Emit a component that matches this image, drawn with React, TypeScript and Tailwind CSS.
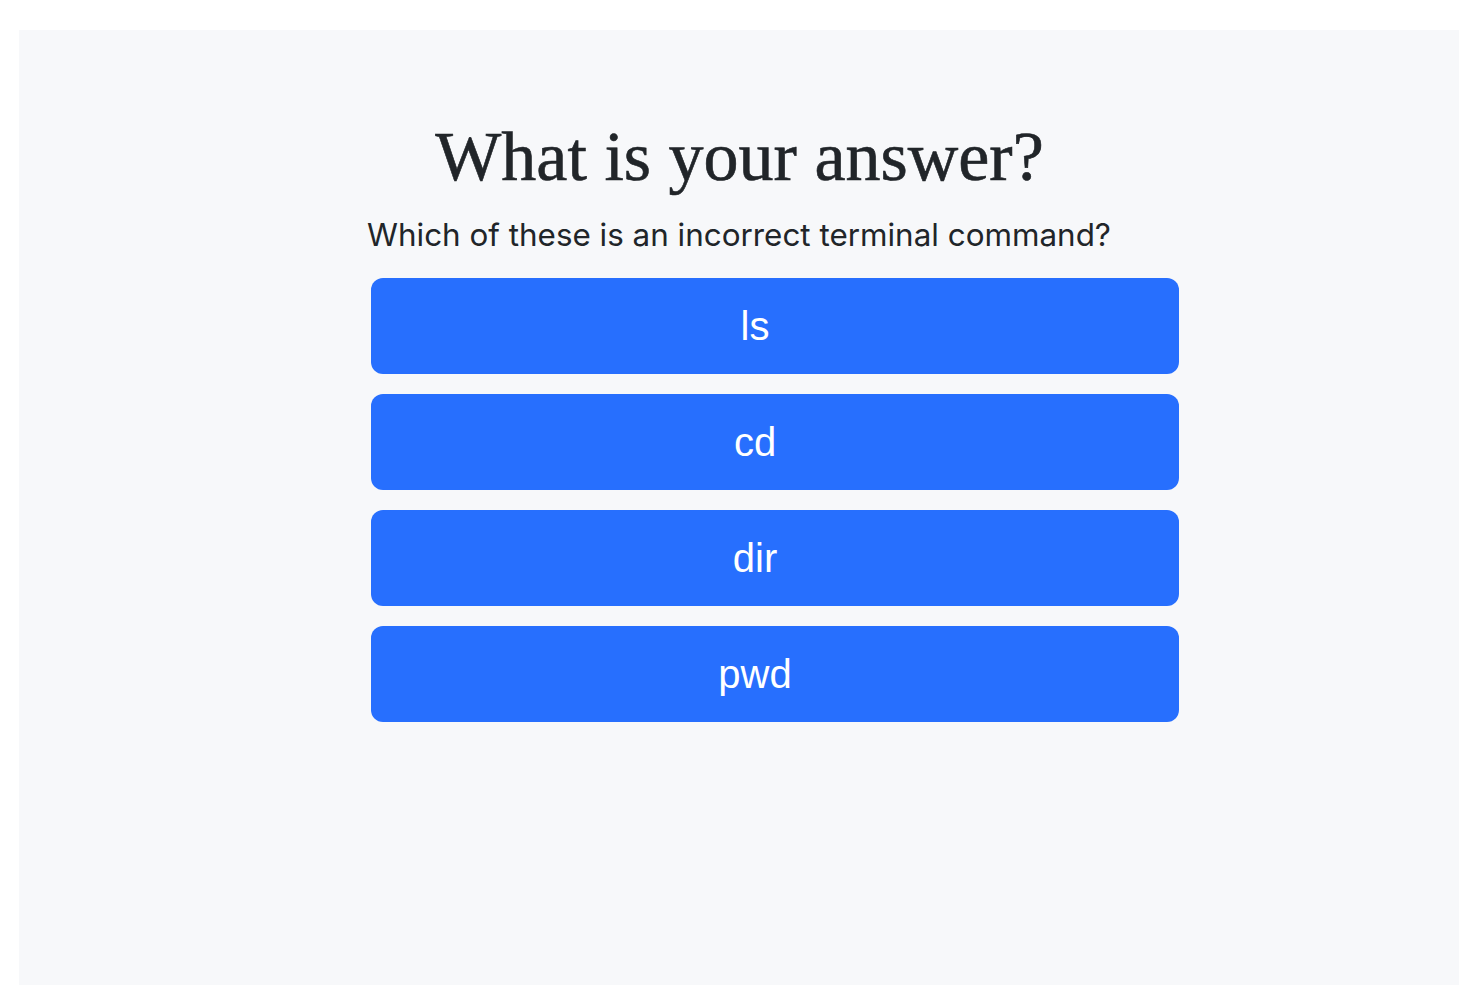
export default function App() {
  const options = ["ls", "cd", "dir", "pwd"];
  return (
    <div className="w-[1482px] h-[1002px] bg-white pt-[30px] pl-[19px]">
      <div className="w-[1440px] h-[955px] bg-[#f7f8fa] flex flex-col items-center">
        <h1
          className="mt-[87px] text-[70px] leading-[80px] text-[#212529] pl-[1px]"
          style={{ fontFamily: '"Liberation Serif", "DejaVu Serif", serif', WebkitTextStroke: "0.6px #212529" }}
        >
          What is your answer?
        </h1>
        <p
          className="mt-[18px] text-[31.4px] leading-[40px] text-[#212529]"
          style={{ fontFamily: 'Inter, "Noto Sans", sans-serif' }}
        >
          Which of these is an incorrect terminal command?
        </p>
        <div className="mt-[23px] flex flex-col gap-[20px] ml-[72px]">
          {options.map((o) => (
            <button
              key={o}
              className="w-[808px] h-[96px] rounded-[12px] bg-[#276ffe] text-white text-[40px] pr-10 flex items-center justify-center"
              style={{ fontFamily: '"Liberation Sans", Arial, sans-serif' }}
            >
              {o}
            </button>
          ))}
        </div>
      </div>
    </div>
  );
}
